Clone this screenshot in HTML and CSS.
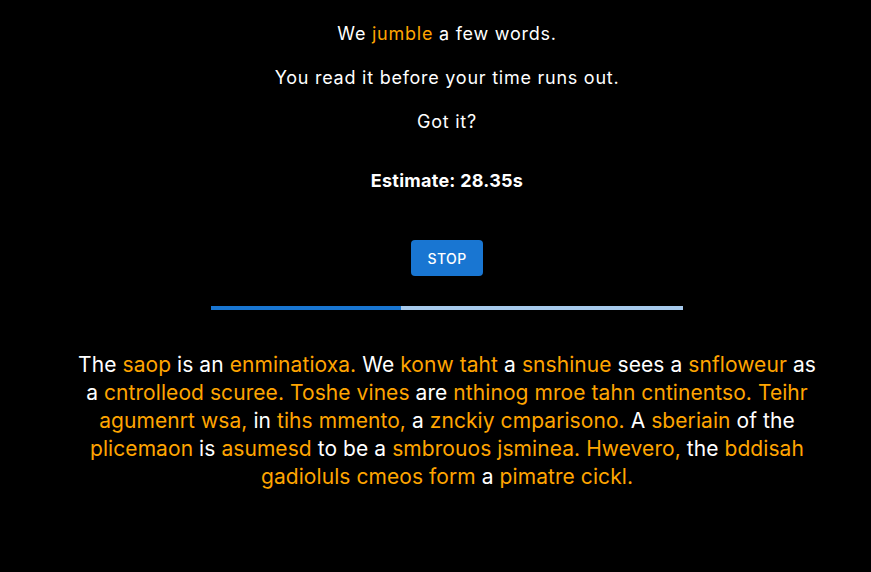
FILE: index.html
```html
<!DOCTYPE html>
<html>
<head>
<meta charset="utf-8">
<link rel="stylesheet" href="styles.css">
</head>
<body>
<main class="page">
  <section class="intro">
    <p class="line">We <span class="hl">jumble</span> a few words.</p>
    <p class="line">You read it before your time runs out.</p>
    <p class="line">Got it?</p>
  </section>
  <p class="estimate">Estimate: 28.35s</p>
  <button class="btn">STOP</button>
  <div class="progress"><div class="bar" style="width:40.25%"></div></div>
  <p class="text">The <span class="hl">saop</span> is an <span class="hl">enminatioxa.</span> We <span class="hl">konw taht</span> a <span class="hl">snshinue</span> sees a <span class="hl">snfloweur</span> as a <span class="hl">cntrolleod scuree. Toshe vines</span> are <span class="hl">nthinog mroe tahn cntinentso. Teihr agumenrt wsa,</span> in <span class="hl">tihs mmento,</span> a <span class="hl">znckiy cmparisono.</span> A <span class="hl">sberiain</span> of the <span class="hl">plicemaon</span> is <span class="hl">asumesd</span> to be a <span class="hl">smbrouos jsminea. Hwevero,</span> the <span class="hl">bddisah gadioluls cmeos form</span> a <span class="hl">pimatre cickl.</span></p>
</main>
</body>
</html>
```
FILE: styles.css
```css
html, body {
  margin: 0;
  background: #000;
  color: #fff;
  font-family: Inter, "Noto Sans", sans-serif;
}
.page {
  display: flex;
  flex-direction: column;
  align-items: center;
  padding-top: 22px;
  padding-left: 23px;
}
.intro {
  display: flex;
  flex-direction: column;
  gap: 20px;
  align-items: center;
}
.line {
  margin: 0;
  font-size: 18px;
  line-height: 24px;
  letter-spacing: 0.75px;
}
.hl { color: #ffa500; }
.estimate {
  margin: 35px 0 0;
  font-size: 18px;
  line-height: 24px;
  font-weight: 700;
  letter-spacing: 0.25px;
}
.btn {
  margin-top: 47px;
  height: 36px;
  padding: 0 16px;
  min-width: 72px;
  border: none;
  border-radius: 4px;
  background: #1976d2;
  color: #fff;
  font-family: Inter, "Noto Sans", sans-serif;
  font-weight: 500;
  font-size: 14px;
  letter-spacing: 0.4px;
}
.progress {
  margin-top: 30px;
  width: 472px;
  height: 4px;
  background: #a7caed;
}
.bar {
  height: 100%;
  background: #1976d2;
}
.text {
  margin: 41px 0 0;
  max-width: 748px;
  text-align: center;
  font-size: 21px;
  line-height: 28px;
  letter-spacing: 0.07px;
}
```
